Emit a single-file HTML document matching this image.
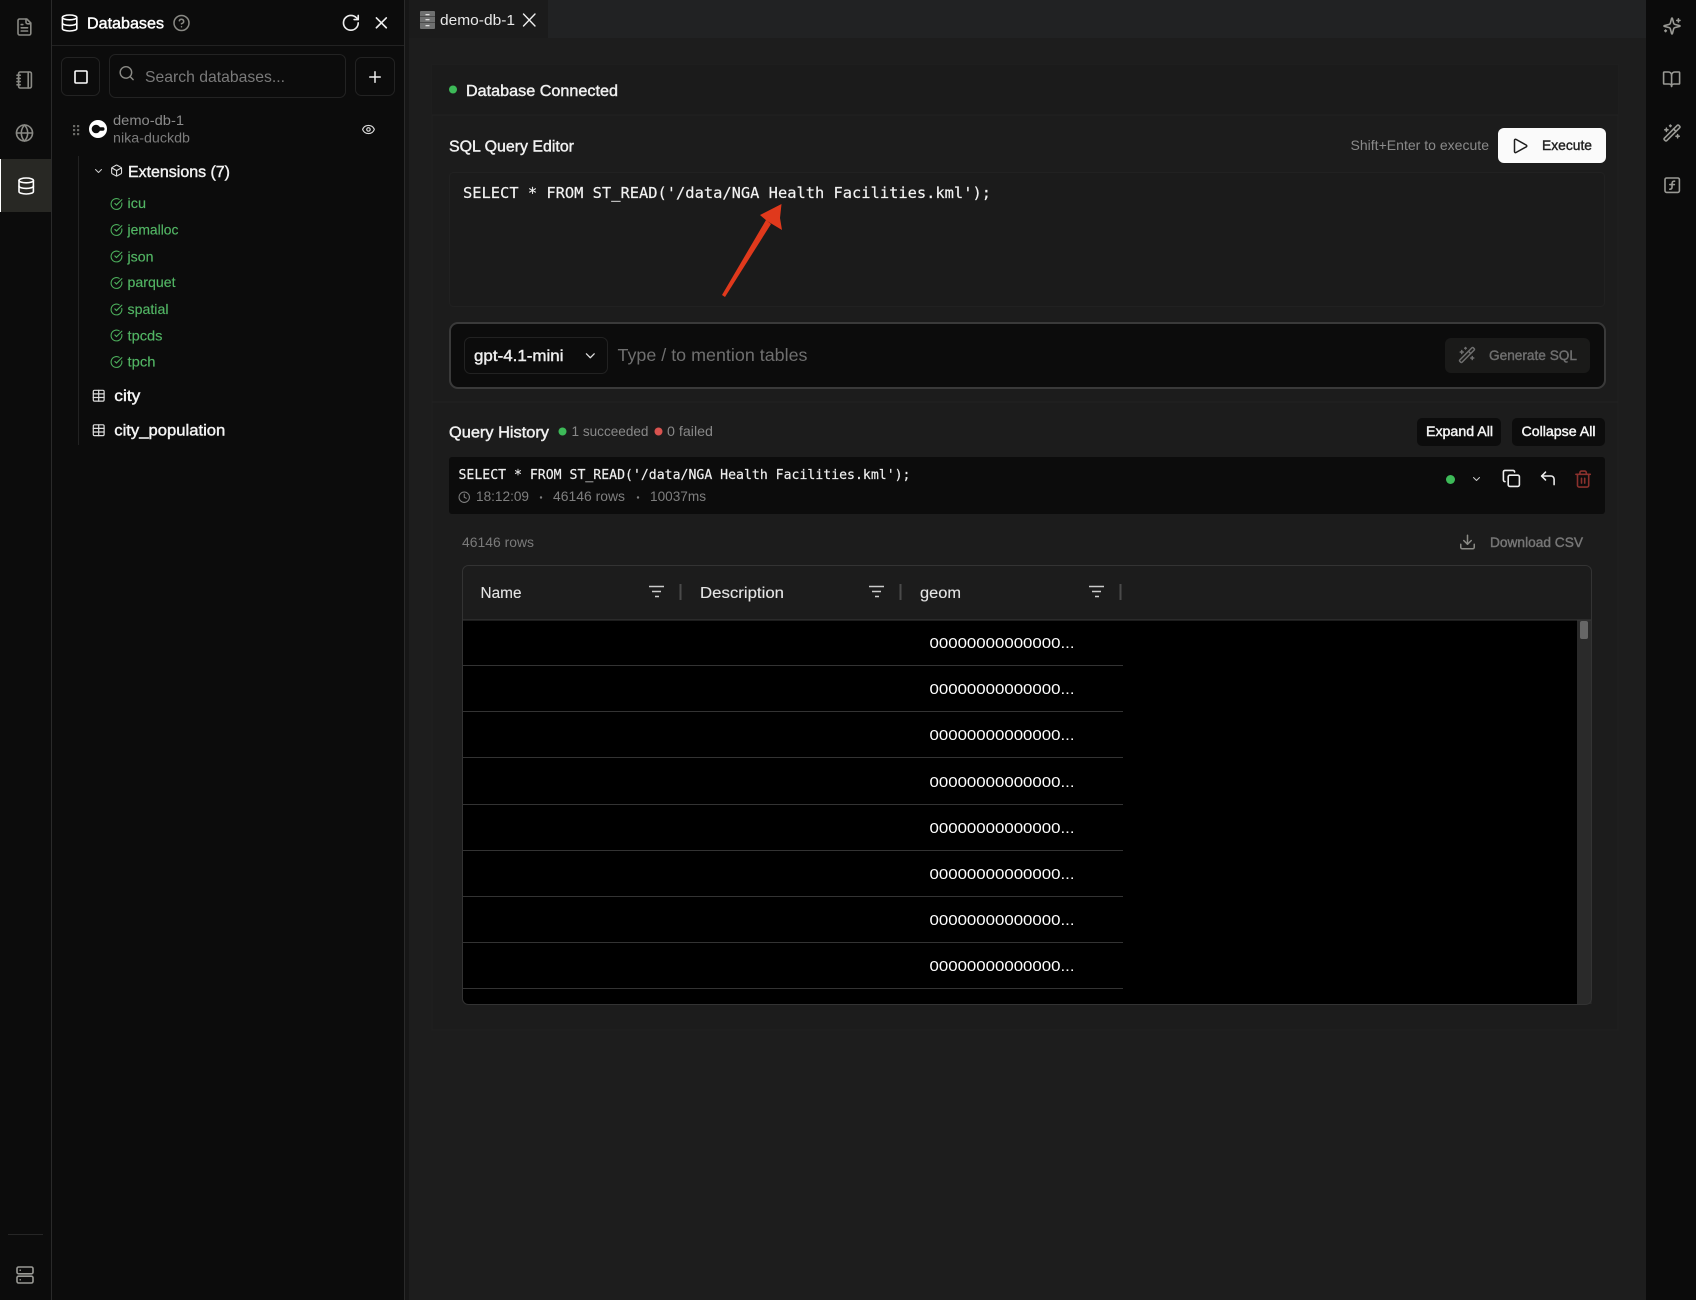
<!DOCTYPE html>
<html lang="en"><head><meta charset="utf-8"><title>Databases</title>
<style>
html,body{margin:0;padding:0;background:#1d1d1d;width:1696px;height:1300px;overflow:hidden}
svg{display:block}
text{font-family:"Liberation Sans",sans-serif;white-space:pre}
.m{stroke:currentColor;stroke-width:.42px}
.mono{font-family:"DejaVu Sans Mono","Liberation Mono",monospace;stroke:currentColor;stroke-width:.18px}
.i{fill:none;stroke-width:2;stroke-linecap:round;stroke-linejoin:round}
</style></head><body>
<svg xmlns="http://www.w3.org/2000/svg" width="1696" height="1300" viewBox="0 0 1696 1300">
<!-- panels -->
<rect width="1696" height="1300" fill="#1d1d1d"/>
<rect x="409" y="0" width="1237" height="38" fill="#212223"/>
<rect x="409" y="0" width="139" height="38" fill="#1b1b1b"/>
<rect x="432" y="65" width="1186" height="965" fill="#1c1c1c" stroke="#202020"/>
<rect x="432" y="65" width="1186" height="50" fill="#1b1b1b"/>
<path d="M432 115H1618M432 402H1618" stroke="#222"/>
<rect x="0" y="0" width="405" height="1300" fill="#0c0c0c"/>
<rect x="405" y="0" width="4" height="1300" fill="#161616"/>
<path d="M51.500 0V1300M404.500 0V1300" stroke="#2a2a2a"/>
<rect x="1646" y="0" width="50" height="1300" fill="#0b0b0b"/>
<rect x="1" y="159" width="50" height="53" fill="#282824"/>
<rect x="0" y="159" width="1" height="53" fill="#fff"/>
<path d="M52 45.500H404" stroke="#222"/>
<path d="M8 1234.500H43" stroke="#262626"/>

<!-- rail icons -->
<g class="i" stroke="#8a8a85">
<g transform="translate(14.800 17.400) scale(.8)"><path d="M15 2H6a2 2 0 0 0-2 2v16a2 2 0 0 0 2 2h12a2 2 0 0 0 2-2V7Z"/><path d="M14 2v4a2 2 0 0 0 2 2h4"/><path d="M10 9H8M16 13H8M16 17H8"/></g>
<g transform="translate(15.400 70.400) scale(.8)"><path d="M2 6h4M2 10h4M2 14h4M2 18h4"/><rect width="16" height="20" x="4" y="2" rx="2"/><path d="M16 2v20"/></g>
<g transform="translate(14.900 123.400) scale(.8)"><circle cx="12" cy="12" r="10"/><path d="M12 2a14.500 14.500 0 0 0 0 20 14.500 14.500 0 0 0 0-20"/><path d="M2 12h20"/></g>
</g>
<g class="i" stroke="#fff" transform="translate(16.600 176.400) scale(.8)"><ellipse cx="12" cy="5" rx="9" ry="3"/><path d="M3 5V19A9 3 0 0 0 21 19V5"/><path d="M3 12A9 3 0 0 0 21 12"/></g>
<g class="i" stroke="#9a9a95" transform="translate(15.400 1265.400) scale(.8)"><rect width="20" height="8.500" x="2" y="2" rx="2"/><rect width="20" height="8.500" x="2" y="13.500" rx="2"/><path d="M6 6h.01M6 18h.01"/></g>

<!-- right rail -->
<g class="i" stroke="#9a9a95">
<g transform="translate(1662.400 16.400) scale(.8)"><path d="M9.937 15.500A2 2 0 0 0 8.500 14.063l-6.135-1.582a.5.5 0 0 1 0-.962L8.500 9.936A2 2 0 0 0 9.937 8.500l1.582-6.135a.5.5 0 0 1 .963 0L14.063 8.500A2 2 0 0 0 15.500 9.937l6.135 1.581a.5.5 0 0 1 0 .964L15.500 14.063a2 2 0 0 0-1.437 1.437l-1.582 6.135a.5.5 0 0 1-.963 0z"/><path d="M20 3v4M22 5h-4M4 17v2M5 18H3"/></g>
<g transform="translate(1662 69.600) scale(.8)"><path d="M12 7v14"/><path d="M3 18a1 1 0 0 1-1-1V4a1 1 0 0 1 1-1h5a4 4 0 0 1 4 4 4 4 0 0 1 4-4h5a1 1 0 0 1 1 1v13a1 1 0 0 1-1 1h-6a3 3 0 0 0-3 3 3 3 0 0 0-3-3z"/></g>
<g transform="translate(1662.400 123.400) scale(.8)"><path d="M21.640 3.640l-1.280-1.280a1.210 1.210 0 0 0-1.720 0L2.360 18.640a1.210 1.210 0 0 0 0 1.720l1.280 1.280a1.200 1.200 0 0 0 1.720 0L21.640 5.360a1.200 1.200 0 0 0 0-1.720"/><path d="M14 7l3 3M5 6v4M19 14v4M10 2v2M7 8H3M21 16h-4M11 3H9"/></g>
<g transform="translate(1662.600 175.600) scale(.8)"><rect width="18" height="18" x="3" y="3" rx="2"/><path d="M9 17c2 0 2.800-1 2.800-2.800V10c0-2 1-3.300 3.200-3"/><path d="M9 11.200h5.700"/></g>
</g>

<!-- sidebar header -->
<g class="i" stroke="#fff" transform="translate(60 13.400) scale(.8)"><ellipse cx="12" cy="5" rx="9" ry="3"/><path d="M3 5V19A9 3 0 0 0 21 19V5"/><path d="M3 12A9 3 0 0 0 21 12"/></g>
<text x="87" y="28.500" font-size="16" fill="#fff" color="#fff" class="m" textLength="77" lengthAdjust="spacingAndGlyphs">Databases</text>
<g class="i" stroke="#8a8a85" transform="translate(172.500 14) scale(.75)"><circle cx="12" cy="12" r="10"/><path d="M9.090 9a3 3 0 0 1 5.830 1c0 2-3 3-3 3"/><path d="M12 17h.01"/></g>
<g class="i" stroke="#eee" transform="translate(341 13) scale(.82)"><path d="M21 12a9 9 0 1 1-9-9c2.520 0 4.930 1 6.740 2.740L21 8"/><path d="M21 3v5h-5"/></g>
<g class="i" stroke="#eee" transform="translate(371.500 13) scale(.82)"><path d="M18 6 6 18M6 6l12 12"/></g>

<!-- sidebar toolbar -->
<rect x="61.500" y="57.500" width="38" height="38" rx="6" fill="#0c0c0c" stroke="#232323"/>
<rect x="75" y="71" width="12" height="12" rx="1" fill="none" stroke="#fff" stroke-width="1.600"/>
<rect x="109.500" y="54.500" width="236" height="43" rx="6" fill="#0c0c0c" stroke="#232323"/>
<g class="i" stroke="#8a8a85" transform="translate(118 64.500) scale(.72)"><circle cx="11" cy="11" r="8"/><path d="M21 21l-4.300-4.300"/></g>
<text x="145" y="82" font-size="16" fill="#7a7a7a" textLength="140" lengthAdjust="spacingAndGlyphs">Search databases...</text>
<rect x="355.500" y="57.500" width="39" height="38" rx="6" fill="#0c0c0c" stroke="#232323"/>
<g class="i" stroke="#eee" transform="translate(366 68) scale(.75)"><path d="M5 12h14M12 5v14"/></g>

<!-- db row -->
<g fill="#6a6a66"><rect x="73" y="125" width="2.200" height="2.200"/><rect x="77" y="125" width="2.200" height="2.200"/><rect x="73" y="129" width="2.200" height="2.200"/><rect x="77" y="129" width="2.200" height="2.200"/><rect x="73" y="133" width="2.200" height="2.200"/><rect x="77" y="133" width="2.200" height="2.200"/></g>
<circle cx="98" cy="129" r="9" fill="#fff"/><circle cx="96" cy="129" r="4.300" fill="#0c0c0c"/><rect x="98" y="127.300" width="6.500" height="3.400" rx="1.700" fill="#0c0c0c"/>
<text x="113" y="125" font-size="14" fill="#8b8b8b" textLength="71" lengthAdjust="spacingAndGlyphs">demo-db-1</text>
<text x="113" y="142.500" font-size="14" fill="#7c7c7c" textLength="77" lengthAdjust="spacingAndGlyphs">nika-duckdb</text>
<g class="i" stroke="#ddd" transform="translate(361.500 122.500) scale(.58)"><path d="M2.062 12.348a1 1 0 0 1 0-.696 10.750 10.750 0 0 1 19.876 0 1 1 0 0 1 0 .696 10.750 10.750 0 0 1-19.876 0"/><circle cx="12" cy="12" r="3"/></g>
<path d="M78.500 156V445" stroke="#222"/>
<g class="i" stroke="#ccc" transform="translate(92.500 165) scale(.5)"><path d="M6 9l6 6 6-6"/></g>
<g class="i" stroke="#ddd" transform="translate(110 164) scale(.55)"><path d="M11 21.730a2 2 0 0 0 2 0l7-4A2 2 0 0 0 21 16V8a2 2 0 0 0-1-1.730l-7-4a2 2 0 0 0-2 0l-7 4A2 2 0 0 0 3 8v8a2 2 0 0 0 1 1.730z"/><path d="M12 22V12M3.300 7l8.700 5 8.700-5"/></g>
<text x="128" y="177" font-size="16" fill="#f2f2f2" color="#f2f2f2" class="m" textLength="102" lengthAdjust="spacingAndGlyphs">Extensions (7)</text>

<!-- extensions -->
<g class="i" stroke="#4caf5c">
<g transform="translate(110 197.500) scale(.54)"><path d="M21.801 10A10 10 0 1 1 17 3.335"/><path d="M9 11l3 3L22 4"/></g>
<g transform="translate(110 223.500) scale(.54)"><path d="M21.801 10A10 10 0 1 1 17 3.335"/><path d="M9 11l3 3L22 4"/></g>
<g transform="translate(110 250) scale(.54)"><path d="M21.801 10A10 10 0 1 1 17 3.335"/><path d="M9 11l3 3L22 4"/></g>
<g transform="translate(110 276.500) scale(.54)"><path d="M21.801 10A10 10 0 1 1 17 3.335"/><path d="M9 11l3 3L22 4"/></g>
<g transform="translate(110 303) scale(.54)"><path d="M21.801 10A10 10 0 1 1 17 3.335"/><path d="M9 11l3 3L22 4"/></g>
<g transform="translate(110 329) scale(.54)"><path d="M21.801 10A10 10 0 1 1 17 3.335"/><path d="M9 11l3 3L22 4"/></g>
<g transform="translate(110 355.500) scale(.54)"><path d="M21.801 10A10 10 0 1 1 17 3.335"/><path d="M9 11l3 3L22 4"/></g>
</g>
<g font-size="14" fill="#52b564" stroke="#52b564" stroke-width=".15">
<text x="127.500" y="208" textLength="18.500" lengthAdjust="spacingAndGlyphs">icu</text>
<text x="127.500" y="234.300" textLength="51" lengthAdjust="spacingAndGlyphs">jemalloc</text>
<text x="127.500" y="261.500" textLength="26" lengthAdjust="spacingAndGlyphs">json</text>
<text x="127.500" y="287" textLength="48" lengthAdjust="spacingAndGlyphs">parquet</text>
<text x="127.500" y="314" textLength="41" lengthAdjust="spacingAndGlyphs">spatial</text>
<text x="127.500" y="340.500" textLength="35" lengthAdjust="spacingAndGlyphs">tpcds</text>
<text x="127.500" y="366.500" textLength="28" lengthAdjust="spacingAndGlyphs">tpch</text>
</g>
<!-- tables -->
<g class="i" stroke="#ddd">
<g transform="translate(91.500 388.500) scale(.6)"><path d="M12 3v18"/><rect width="18" height="18" x="3" y="3" rx="2"/><path d="M3 9h18M3 15h18"/></g>
<g transform="translate(91.500 423) scale(.6)"><path d="M12 3v18"/><rect width="18" height="18" x="3" y="3" rx="2"/><path d="M3 9h18M3 15h18"/></g>
</g>
<text x="114.300" y="401" font-size="16" fill="#f5f5f5" color="#f5f5f5" class="m" textLength="26" lengthAdjust="spacingAndGlyphs">city</text>
<text x="114.300" y="435.500" font-size="16" fill="#f5f5f5" color="#f5f5f5" class="m" textLength="111" lengthAdjust="spacingAndGlyphs">city_population</text>

<!-- tab -->
<rect x="420" y="11" width="15" height="18" rx="1" fill="#6f7070"/>
<path d="M420 16.500H435M420 22.500H435" stroke="#4a4a4a"/>
<rect x="425.500" y="14" width="4" height="1.300" fill="#ddd"/><rect x="425.500" y="19" width="4" height="1.300" fill="#ddd"/><rect x="425.500" y="25" width="4" height="1.300" fill="#ddd"/>
<text x="440" y="25" font-size="15" fill="#e8e8e8" textLength="75" lengthAdjust="spacingAndGlyphs">demo-db-1</text>
<path d="M523.500 14L535 26M535 14L523.500 26" stroke="#eee" stroke-width="1.400" fill="none" stroke-linecap="round"/>

<!-- status -->
<circle cx="453" cy="89.500" r="4" fill="#3dba58"/>
<text x="466" y="96" font-size="15.500" fill="#f0f0f0" color="#f0f0f0" class="m" textLength="152" lengthAdjust="spacingAndGlyphs">Database Connected</text>

<!-- editor -->
<text x="449" y="151.500" font-size="15.500" fill="#f0f0f0" color="#f0f0f0" class="m" textLength="125" lengthAdjust="spacingAndGlyphs">SQL Query Editor</text>
<text x="1350.500" y="150" font-size="14" fill="#8a8a8a" textLength="138.500" lengthAdjust="spacingAndGlyphs">Shift+Enter to execute</text>
<rect x="1498" y="128" width="108" height="35" rx="6" fill="#fafafa"/>
<path d="M1514.500 140.300a1 1 0 0 1 1.500-.9l10.300 5.700a1 1 0 0 1 0 1.700L1516 152.500a1 1 0 0 1-1.500-.9z" fill="none" stroke="#1d1d1d" stroke-width="1.500" stroke-linejoin="round"/>
<text x="1542" y="150" font-size="14" fill="#222" color="#222" class="m" textLength="50" lengthAdjust="spacingAndGlyphs">Execute</text>
<rect x="449.500" y="172.500" width="1155" height="134" rx="4" fill="#1b1b1b" stroke="#212121"/>
<text x="463" y="198" class="mono" color="#f2f2f2" font-size="15.400" fill="#f2f2f2" textLength="528" lengthAdjust="spacingAndGlyphs">SELECT * FROM ST_READ('/data/NGA Health Facilities.kml');</text>
<!-- arrow -->
<polygon points="722,295 725,297 771,224 766,220" fill="#e0391c"/>
<polygon points="781.500,204 760,215 767,221 782,230 780,218" fill="#e0391c"/>

<!-- AI box -->
<rect x="450" y="323" width="1155" height="65" rx="8" fill="#0c0c0c" stroke="#3a3a3a" stroke-width="2"/>
<rect x="464.500" y="337.500" width="143" height="36" rx="6" fill="#0c0c0c" stroke="#222"/>
<text x="474" y="361" font-size="16" fill="#eee" color="#eee" class="m" textLength="89.500" lengthAdjust="spacingAndGlyphs">gpt-4.1-mini</text>
<g class="i" stroke="#ddd" transform="translate(582.500 348) scale(.65)"><path d="M6 9l6 6 6-6"/></g>
<text x="617.500" y="361" font-size="17.500" fill="#6f6f6f" textLength="190" lengthAdjust="spacingAndGlyphs">Type / to mention tables</text>
<rect x="1445" y="338" width="145" height="35" rx="6" fill="#1a1a19"/>
<g class="i" stroke="#6f6f6f" transform="translate(1458 346) scale(.75)"><path d="M21.640 3.640l-1.280-1.280a1.210 1.210 0 0 0-1.720 0L2.360 18.640a1.210 1.210 0 0 0 0 1.720l1.280 1.280a1.200 1.200 0 0 0 1.720 0L21.640 5.360a1.200 1.200 0 0 0 0-1.720"/><path d="M14 7l3 3M5 6v4M19 14v4M10 2v2M7 8H3M21 16h-4M11 3H9"/></g>
<text x="1489" y="360" font-size="14" fill="#6f6f6f" color="#6f6f6f" class="m" textLength="88" lengthAdjust="spacingAndGlyphs">Generate SQL</text>

<!-- history header -->
<text x="449" y="437.500" font-size="15.500" fill="#f0f0f0" color="#f0f0f0" class="m" textLength="100" lengthAdjust="spacingAndGlyphs">Query History</text>
<circle cx="562.500" cy="431.500" r="4" fill="#3dba58"/>
<text x="571.500" y="436" font-size="14" fill="#888" textLength="77" lengthAdjust="spacingAndGlyphs">1 succeeded</text>
<circle cx="658.500" cy="431.500" r="4" fill="#d9534f"/>
<text x="667" y="436" font-size="14" fill="#888" textLength="46" lengthAdjust="spacingAndGlyphs">0 failed</text>
<rect x="1417" y="418" width="84" height="28" rx="5" fill="#0c0c0c"/>
<text x="1426" y="436" font-size="13.500" fill="#f5f5f5" color="#f5f5f5" class="m" textLength="67" lengthAdjust="spacingAndGlyphs">Expand All</text>
<rect x="1512" y="418" width="93" height="28" rx="5" fill="#0c0c0c"/>
<text x="1521.500" y="436" font-size="13.500" fill="#f5f5f5" color="#f5f5f5" class="m" textLength="74" lengthAdjust="spacingAndGlyphs">Collapse All</text>

<!-- history row -->
<rect x="449" y="457" width="1156" height="57" rx="3" fill="#0c0c0c"/>
<text x="458.500" y="479" class="mono" color="#eee" font-size="13.200" fill="#eee" textLength="452" lengthAdjust="spacingAndGlyphs">SELECT * FROM ST_READ('/data/NGA Health Facilities.kml');</text>
<g class="i" stroke="#7f7f7f" transform="translate(458 491) scale(.52)"><circle cx="12" cy="12" r="10"/><path d="M12 6v6l4 2"/></g>
<g font-size="14" fill="#7f7f7f">
<text x="476" y="501" textLength="53" lengthAdjust="spacingAndGlyphs">18:12:09</text>
<circle cx="541" cy="497.500" r="1.200"/>
<text x="553" y="501" textLength="72" lengthAdjust="spacingAndGlyphs">46146 rows</text>
<circle cx="638" cy="497.500" r="1.200"/>
<text x="650" y="501" textLength="56" lengthAdjust="spacingAndGlyphs">10037ms</text>
</g>
<circle cx="1450.500" cy="479.500" r="4.500" fill="#3dba58"/>
<g class="i" stroke="#ccc" transform="translate(1470.500 473) scale(.5)"><path d="M6 9l6 6 6-6"/></g>
<g class="i" stroke="#eee" transform="translate(1501.800 468.800) scale(.8)"><rect width="14" height="14" x="8" y="8" rx="2"/><path d="M4 16c-1.100 0-2-.9-2-2V4c0-1.100.9-2 2-2h10c1.100 0 2 .9 2 2"/></g>
<g class="i" stroke="#eee" transform="translate(1538.500 469) scale(.78)"><path d="M9 14L4 9l5-5"/><path d="M20 20v-7a4 4 0 0 0-4-4H4"/></g>
<g class="i" stroke="#8a312d" transform="translate(1573.500 469.500) scale(.8)"><path d="M3 6h18M19 6v14c0 1-1 2-2 2H7c-1 0-2-1-2-2V6M8 6V4c0-1 1-2 2-2h4c1 0 2 1 2 2v2M10 11v6M14 11v6"/></g>

<!-- result meta -->
<text x="462" y="547" font-size="14" fill="#7a7a7a" textLength="72" lengthAdjust="spacingAndGlyphs">46146 rows</text>
<g class="i" stroke="#8a8a85" transform="translate(1458.500 533) scale(.75)"><path d="M21 15v4a2 2 0 0 1-2 2H5a2 2 0 0 1-2-2v-4"/><path d="M7 10l5 5 5-5"/><path d="M12 15V3"/></g>
<text x="1490" y="547" font-size="14" fill="#777" color="#777" class="m" textLength="93" lengthAdjust="spacingAndGlyphs">Download CSV</text>

<!-- table -->
<rect x="462.500" y="565.500" width="1129" height="439" rx="6" fill="#000"/>
<path d="M462.500 620V571.500a6 6 0 0 1 6-6H1585.500a6 6 0 0 1 6 6V620Z" fill="#1c1c1c"/>
<rect x="1577" y="620" width="14.500" height="384" fill="#2a2a2a"/>
<rect x="1580" y="621" width="8" height="18" rx="2" fill="#666"/>
<rect x="462.500" y="565.500" width="1129" height="439" rx="6" fill="none" stroke="#333"/>
<path d="M463 620H1591" stroke="#3a3a3a"/>
<g font-size="15.500" fill="#e4e4e4" stroke="#e4e4e4" stroke-width=".12">
<text x="480.500" y="598" textLength="41" lengthAdjust="spacingAndGlyphs">Name</text>
<text x="700" y="598" textLength="84" lengthAdjust="spacingAndGlyphs">Description</text>
<text x="920" y="598" textLength="41" lengthAdjust="spacingAndGlyphs">geom</text>
</g>
<g stroke="#ccc" stroke-width="1.600" fill="none">
<path d="M649 586.500H664M652 591.500H661M655 596.500H659"/>
<path d="M869 586.500H884M872 591.500H881M875 596.500H879"/>
<path d="M1089 586.500H1104M1092 591.500H1101M1095 596.500H1099"/>
</g>
<path d="M680.500 584V600M900.500 584V600M1120.500 584V600" stroke="#4a4a4a" stroke-width="2"/>
<g stroke="#333">
<path d="M463 665.500H1123M463 711.500H1123M463 757.500H1123M463 804.500H1123M463 850.500H1123M463 896.500H1123M463 942.500H1123M463 988.500H1123"/>
</g>
<g font-size="15" fill="#fff">
<text x="929.500" y="648" textLength="145" lengthAdjust="spacingAndGlyphs">00000000000000...</text>
<text x="929.500" y="694" textLength="145" lengthAdjust="spacingAndGlyphs">00000000000000...</text>
<text x="929.500" y="740" textLength="145" lengthAdjust="spacingAndGlyphs">00000000000000...</text>
<text x="929.500" y="787" textLength="145" lengthAdjust="spacingAndGlyphs">00000000000000...</text>
<text x="929.500" y="833" textLength="145" lengthAdjust="spacingAndGlyphs">00000000000000...</text>
<text x="929.500" y="879" textLength="145" lengthAdjust="spacingAndGlyphs">00000000000000...</text>
<text x="929.500" y="925" textLength="145" lengthAdjust="spacingAndGlyphs">00000000000000...</text>
<text x="929.500" y="971" textLength="145" lengthAdjust="spacingAndGlyphs">00000000000000...</text>
</g>
</svg>
</body></html>
